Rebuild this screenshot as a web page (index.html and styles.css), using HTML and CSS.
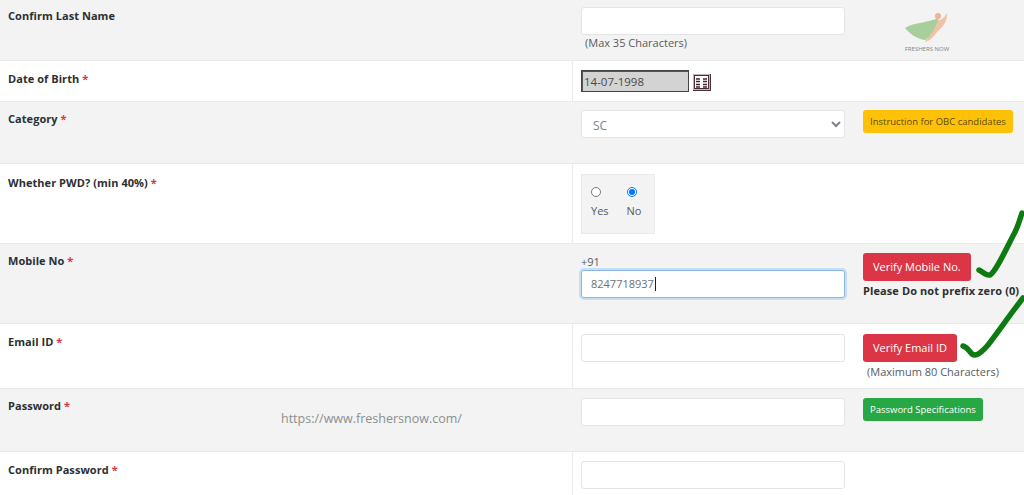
FILE: index.html
```html
<!DOCTYPE html>
<html lang="en">

<head>
    <meta charset="UTF-8">
    <meta name="viewport" content="width=device-width, initial-scale=1.0">
    <title>Registration</title>
    <link rel="stylesheet" href="styles.css">
</head>

<body>
    <div class="form">
        <div class="row grey">
            <div class="label top8">Confirm Last Name</div>
            <div class="field top7">
                <div class="control">
                    <input class="box" type="text">
                    <div class="hint">(Max 35 Characters)</div>
                </div>
                <div class="side logo">
                    <svg width="46" height="31" viewBox="0 0 46 31">
                        <path d="M33 8 C37 9 40 6 43 1 C44 8 39 15 34 19 C30 24 26 29 21 30 C25 22 29 14 33 8 Z" fill="#efc3a5"/>
                        <path d="M1 16 C11 10 23 11 35 6 C32 14 28 23 21 28 C13 27 6 22 1 16 Z" fill="#a8cf9b"/>
                        <circle cx="34" cy="4" r="3" fill="#edb593"/>
                    </svg>
                    <span class="logo-text">FRESHERS NOW</span>
                </div>
            </div>
        </div>
        <div class="row">
            <div class="label top10">Date of Birth <span class="req">*</span></div>
            <div class="field dob top9">
                <input class="date" type="text" value="14-07-1998">
                <svg class="cal" width="18" height="17" viewBox="0 0 18 17">
                    <rect width="18" height="17" fill="#bdb6b8"/>
                    <rect x="1.5" y="1.5" width="14" height="13" fill="#fff" stroke="#5a2338"/>
                    <path d="M3 5h4M10 5h4M3 7.5h4M10 7.5h4M3 10.5h4M10 10.5h4M3 13h4M10 13h4" stroke="#3c2a32" stroke-width="1.4"/>
                    <path d="M0 16.5h18M17.5 0v17" stroke="#3d3a3c"/>
                </svg>
            </div>
        </div>
        <div class="row grey">
            <div class="label">Category <span class="req">*</span></div>
            <div class="field top8">
                <div class="control">
                    <select class="box pick">
                        <option>SC</option>
                    </select>
                </div>
                <div class="side">
                    <button class="btn small yellow">Instruction for OBC candidates</button>
                </div>
            </div>
        </div>
        <div class="row">
            <div class="label top11">Whether PWD? (min 40%) <span class="req">*</span></div>
            <div class="field top10">
                <div class="radios">
                    <label class="radio"><input type="radio" name="pwd">Yes</label>
                    <label class="radio"><input type="radio" name="pwd" checked>No</label>
                </div>
            </div>
        </div>
        <div class="row grey">
            <div class="label">Mobile No <span class="req">*</span></div>
            <div class="field top9">
                <div class="control">
                    <div class="prefix">+91</div>
                    <div class="box focus">8247718937<span class="caret"></span></div>
                </div>
                <div class="side">
                    <button class="btn red">Verify Mobile No.</button>
                    <div class="note">Please Do not prefix zero (0)</div>
                </div>
            </div>
        </div>
        <div class="row">
            <div class="label top10">Email ID <span class="req">*</span></div>
            <div class="field top10">
                <div class="control">
                    <input class="box" type="text">
                </div>
                <div class="side">
                    <button class="btn red">Verify Email ID</button>
                    <div class="hint indent">(Maximum 80 Characters)</div>
                </div>
            </div>
        </div>
        <div class="row grey">
            <div class="label">Password <span class="req">*</span></div>
            <div class="field top9">
                <div class="control">
                    <input class="box" type="password">
                </div>
                <div class="side">
                    <button class="btn small green">Password Specifications</button>
                </div>
            </div>
        </div>
        <div class="row">
            <div class="label top10">Confirm Password <span class="req">*</span></div>
            <div class="field top9">
                <div class="control">
                    <input class="box" type="password">
                </div>
            </div>
        </div>
    </div>

    <div class="watermark">https://www.freshersnow.com/</div>

    <!-- hand drawn ticks on top of the form -->
    <svg class="ticks" width="1024" height="495" viewBox="0 0 1024 495">
        <path d="M979 270 C983 272 986 276 990 275 C996 272 1008 245 1015 232 C1018 226 1020 219 1022 213" />
        <path d="M963 346 C967 347 969 351 972 354 C976 357 981 353 988 345 C998 332 1012 312 1023 298" />
    </svg>
</body>

</html>
```
FILE: styles.css
```css
* {
    box-sizing: border-box;
}

body {
    margin: 0;
    height: 495px;
    overflow: hidden;
    background-color: #fff;
    color: #212529;
    font-family: "Open Sans", "Noto Sans", sans-serif;
    font-size: 11px;
}

.form {
    display: grid;
    grid-template-rows: 61px 41px 62px 80px 80px 65px 63px 43px;
    height: 495px;
}

.row {
    display: flex;
    border-bottom: 1px solid #ebebeb;
}

.row:last-child {
    border-bottom: 0;
}

.grey {
    background-color: #f3f3f3;
}

.label {
    width: 572px;
    padding: 9px 8px 0;
    font-weight: 700;
    letter-spacing: 0.05px;
    color: #2b2f33;
}

.label.top8 {
    padding-top: 8px;
}

.label.top10 {
    padding-top: 10px;
}

.label.top11 {
    padding-top: 11px;
}

.req {
    color: #dc3545;
}

.field {
    flex: 1;
    display: flex;
    padding-left: 8px;
    border-left: 1px solid #ececec;
}

.grey .field {
    border-left-color: #f3f3f3;
}

.field.top7 {
    padding-top: 7px;
}

.field.top8 {
    padding-top: 8px;
}

.field.top9 {
    padding-top: 9px;
}

.field.top10 {
    padding-top: 10px;
}

.control {
    width: 264px;
}

.side {
    margin-left: 18px;
}

.box {
    display: block;
    width: 100%;
    height: 28px;
    padding: 0 9px;
    background-color: #fff;
    border: 1px solid #e2e4e7;
    border-radius: 3px;
    color: #6b7278;
    font-family: inherit;
    font-size: 11px;
}

.pick {
    padding: 3px 0 0 7px;
    color: #7d8388;
    font-size: 12px;
}

.focus {
    line-height: 26px;
    border-color: #86b7e8;
    box-shadow: 0 0 0 2px #c9def4;
}

.caret {
    display: inline-block;
    width: 1px;
    height: 14px;
    margin-left: 1px;
    vertical-align: -3px;
    background-color: #222;
}

.hint {
    padding-left: 4px;
    color: #555b60;
}

.indent {
    margin-top: 2px;
}

.logo {
    display: flex;
    flex-direction: column;
    align-items: center;
    width: 46px;
    margin-left: 59px;
    padding-top: 5px;
}

.logo-text {
    margin-top: 2px;
    color: #7d8488;
    font-size: 6px;
    white-space: nowrap;
}

.date {
    width: 108px;
    height: 22px;
    padding: 0 2px;
    background-color: #d3d3d3;
    border: 1px solid #444;
    box-shadow: inset 1px 1px 0 #555;
    color: #4a4a4a;
    font-family: inherit;
    font-size: 11.5px;
}

.cal {
    margin: 4px 0 0 4px;
}

.btn {
    display: block;
    border: 0;
    border-radius: 3px;
    font-family: inherit;
    white-space: nowrap;
}

.small {
    height: 23px;
    padding: 0 7px;
    font-size: 9.5px;
}

.red {
    height: 28px;
    padding: 0 10px;
    background-color: #dc3545;
    color: #fff;
    font-size: 11px;
    line-height: 26px;
}

.yellow {
    background-color: #ffc107;
    color: #5c4a10;
}

.green {
    background-color: #28a745;
    color: #fff;
}

.radios {
    display: flex;
    width: 74px;
    height: 60px;
    padding: 12px 0 0 9px;
    gap: 18px;
    background-color: #f3f3f3;
    border: 1px solid #eaeaea;
    color: #555b60;
}

.radio {
    display: flex;
    flex-direction: column;
    align-items: flex-start;
}

.radio input {
    width: 10px;
    height: 10px;
    margin: 0 0 6px 0;
}

.prefix {
    height: 17px;
    line-height: 18px;
    color: #555b60;
}

.note {
    margin-top: 2px;
    font-weight: 700;
    letter-spacing: 0.1px;
    color: #2b2f33;
    white-space: nowrap;
}

.watermark {
    position: absolute;
    left: 281px;
    top: 410px;
    color: #8a8f8f;
    font-size: 12.5px;
}

.ticks {
    position: absolute;
    left: 0;
    top: 0;
    pointer-events: none;
}

.ticks path {
    fill: none;
    stroke: #0e7a12;
    stroke-width: 5.5;
    stroke-linecap: round;
    stroke-linejoin: round;
}
```
